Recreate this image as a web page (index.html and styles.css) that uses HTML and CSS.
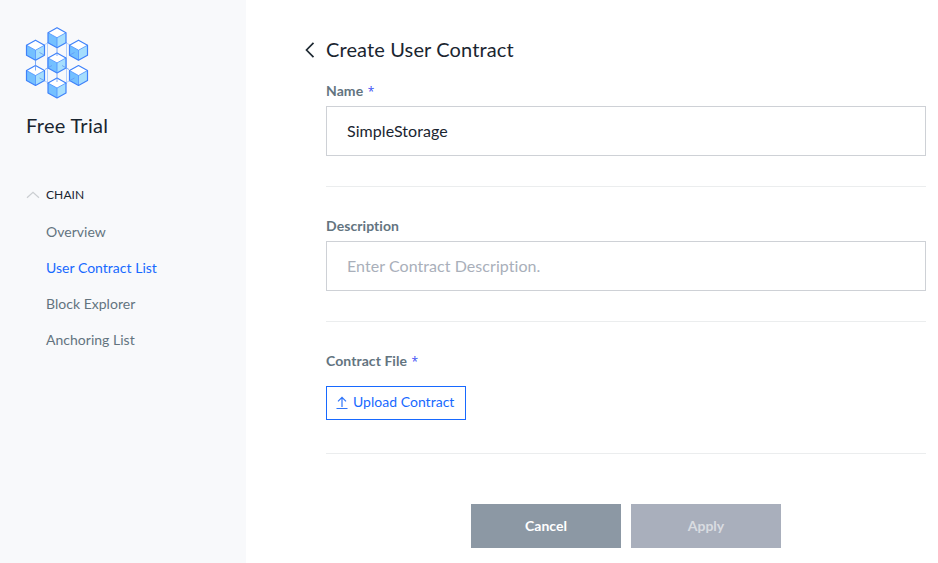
FILE: index.html
```html
<!DOCTYPE html>
<html lang="en">
<head>
<meta charset="utf-8">
<title>Create User Contract</title>
<link rel="stylesheet" href="styles.css">
</head>
<body>
<aside class="sidebar">
  <svg class="logo" width="64" height="74" viewBox="0 0 64 74" aria-hidden="true">
    <defs>
      <g id="cube" stroke-linejoin="round">
        <path d="M0-10 9-5 0 0-9-5Z" fill="#fff"/>
        <path d="M-9-5 0 0V10L-9 5Z" fill="#74c0ff"/>
        <path d="M9-5 0 0V10L9 5Z" fill="#a6defd"/>
        <path d="M-9-5 0 0 9-5M0 0V10" fill="none" stroke="#4a90ff" stroke-width=".8"/>
        <path d="M0-10 9-5V5L0 10-9 5V-5Z" fill="none" stroke="#3f82fa" stroke-width="1.200"/>
      </g>
    </defs>
    <path class="link" d="M22.500 16V58M41.500 16V58M10.500 24 32 11.500 53.500 24M10.500 49.500 32 62 53.500 49.500"/>
    <use href="#cube" x="32" y="11.700"/>
    <use href="#cube" x="10.500" y="24.200"/>
    <use href="#cube" x="53.500" y="24.200"/>
    <use href="#cube" x="10.500" y="49.500"/>
    <use href="#cube" x="53.500" y="49.500"/>
    <use href="#cube" x="32" y="36.900"/>
    <use href="#cube" x="32" y="62"/>
    <path class="arm" d="M14.500 26.500 20 29.500M49.500 26.500 44 29.500M27 39.500 20 43.500M37 39.500 44 43.500M14.500 52 20 55M49.500 52 44 55M32 21.500V30M32 46.500V56M10.500 34V44.500"/>
  </svg>
  <h2 class="plan">Free Trial</h2>
  <nav>
    <div class="group">
      <svg width="14" height="8" viewBox="0 0 14 8" aria-hidden="true"><path d="M1 6.800 7 1.200 13 6.800" fill="none" stroke="#cbced2" stroke-width="1.200"/></svg>
      <span>CHAIN</span>
    </div>
    <ul class="menu">
      <li>Overview</li>
      <li class="active">User Contract List</li>
      <li>Block Explorer</li>
      <li>Anchoring List</li>
    </ul>
  </nav>
</aside>
<main class="main">
  <header class="title">
    <svg width="10" height="16" viewBox="0 0 10 16" aria-hidden="true"><path d="M8.500 .8 1.500 8 8.500 15.200" fill="none" stroke="#1f2a33" stroke-width="1.700"/></svg>
    <h1>Create User Contract</h1>
  </header>
  <section class="field">
    <label for="name">Name <span class="star">*</span></label>
    <input id="name" type="text" value="SimpleStorage">
  </section>
  <section class="field">
    <label for="desc">Description</label>
    <input id="desc" type="text" placeholder="Enter Contract Description.">
  </section>
  <section class="field file">
    <label>Contract File <span class="star">*</span></label>
    <button class="upload" type="button">
      <svg width="12" height="14" viewBox="0 0 12 14" aria-hidden="true"><path d="M6 11V1.500M2 5.300 6 1.300 10 5.300M.5 12.500H11.500" fill="none" stroke="#2f75fa" stroke-width="1.200"/></svg>
      <span>Upload Contract</span>
    </button>
  </section>
  <footer class="actions">
    <button class="btn cancel" type="button">Cancel</button>
    <button class="btn apply" type="button">Apply</button>
  </footer>
</main>
</body>
</html>
```
FILE: styles.css
```css
* { box-sizing: border-box; }
body {
  margin: 0;
  height: 563px;
  display: flex;
  overflow: hidden;
  background: #fff;
  color: #1a2530;
  font-family: Lato, sans-serif;
  font-variant-ligatures: none;
}
h1, h2 { margin: 0; font-size: 20px; line-height: 22px; font-weight: 400; letter-spacing: .13px; }
button, input { font-family: inherit; border-radius: 0; font-variant-ligatures: none; }
svg { display: block; flex: none; }

.sidebar { width: 246px; flex: none; padding: 26px 25px; background: #f8f9fb; }
.link { fill: none; stroke: #b5d0fc; }
.arm { fill: none; stroke: #6098f5; stroke-width: .8; }
.plan { margin: 14px 0 0 1px; letter-spacing: .3px; }
.group {
  display: flex;
  align-items: center;
  gap: 6px;
  margin: 51px 0 0 1px;
  height: 16px;
  font-size: 12px;
}
.group span { padding-bottom: 2px; letter-spacing: .1px; }
.menu { list-style: none; margin: 11px 0 0 21px; padding: 0; font-size: 14px; line-height: 36px; letter-spacing: .02px; color: #63747f; }
.active { color: #1769ff; }

.main { width: 680px; padding: 38px 0 0 59px; }
.title { display: flex; align-items: center; gap: 11px; height: 24px; }
.title h1 { padding-bottom: 2px; }
.field {
  display: flex;
  flex-direction: column;
  align-items: flex-start;
  width: 600px;
  height: 135px;
  margin-left: 21px;
  padding-top: 30px;
  border-bottom: 1px solid #ebedee;
}
.title + .field { height: 125px; padding-top: 20px; }
.file { height: 132px; }
.field label { height: 18px; font-size: 14px; line-height: 18px; font-weight: 700; letter-spacing: .07px; color: #63747f; }
.star { margin-left: 1px; font: 400 12px/1 "Open Sans", sans-serif; color: #3d50f5; }
.field input {
  width: 600px;
  height: 50px;
  margin-top: 6px;
  padding: 0 20px 2px;
  border: 1px solid #ced1d6;
  background: #fff;
  color: #1a2530;
  font-size: 16px;
  letter-spacing: .06px;
}
.field input::placeholder { color: #a9afba; opacity: 1; }
.upload {
  display: flex;
  align-items: center;
  gap: 5px;
  width: 140px;
  height: 34px;
  margin-top: 16px;
  padding: 0 0 0 9px;
  border: 1px solid #1769ff;
  background: #fff;
  color: #1769ff;
  font-size: 14px;
}
.upload span { padding-bottom: 3px; letter-spacing: .02px; }
.actions { display: flex; justify-content: center; gap: 10px; width: 600px; margin: 50px 0 0 21px; }
.btn { width: 150px; height: 44px; padding: 0 0 2px; border: 0; font-size: 14px; font-weight: 700; }
.cancel { background: #8c98a4; color: #fff; }
.apply { background: #a9afbc; color: #d9dce1; }
```
